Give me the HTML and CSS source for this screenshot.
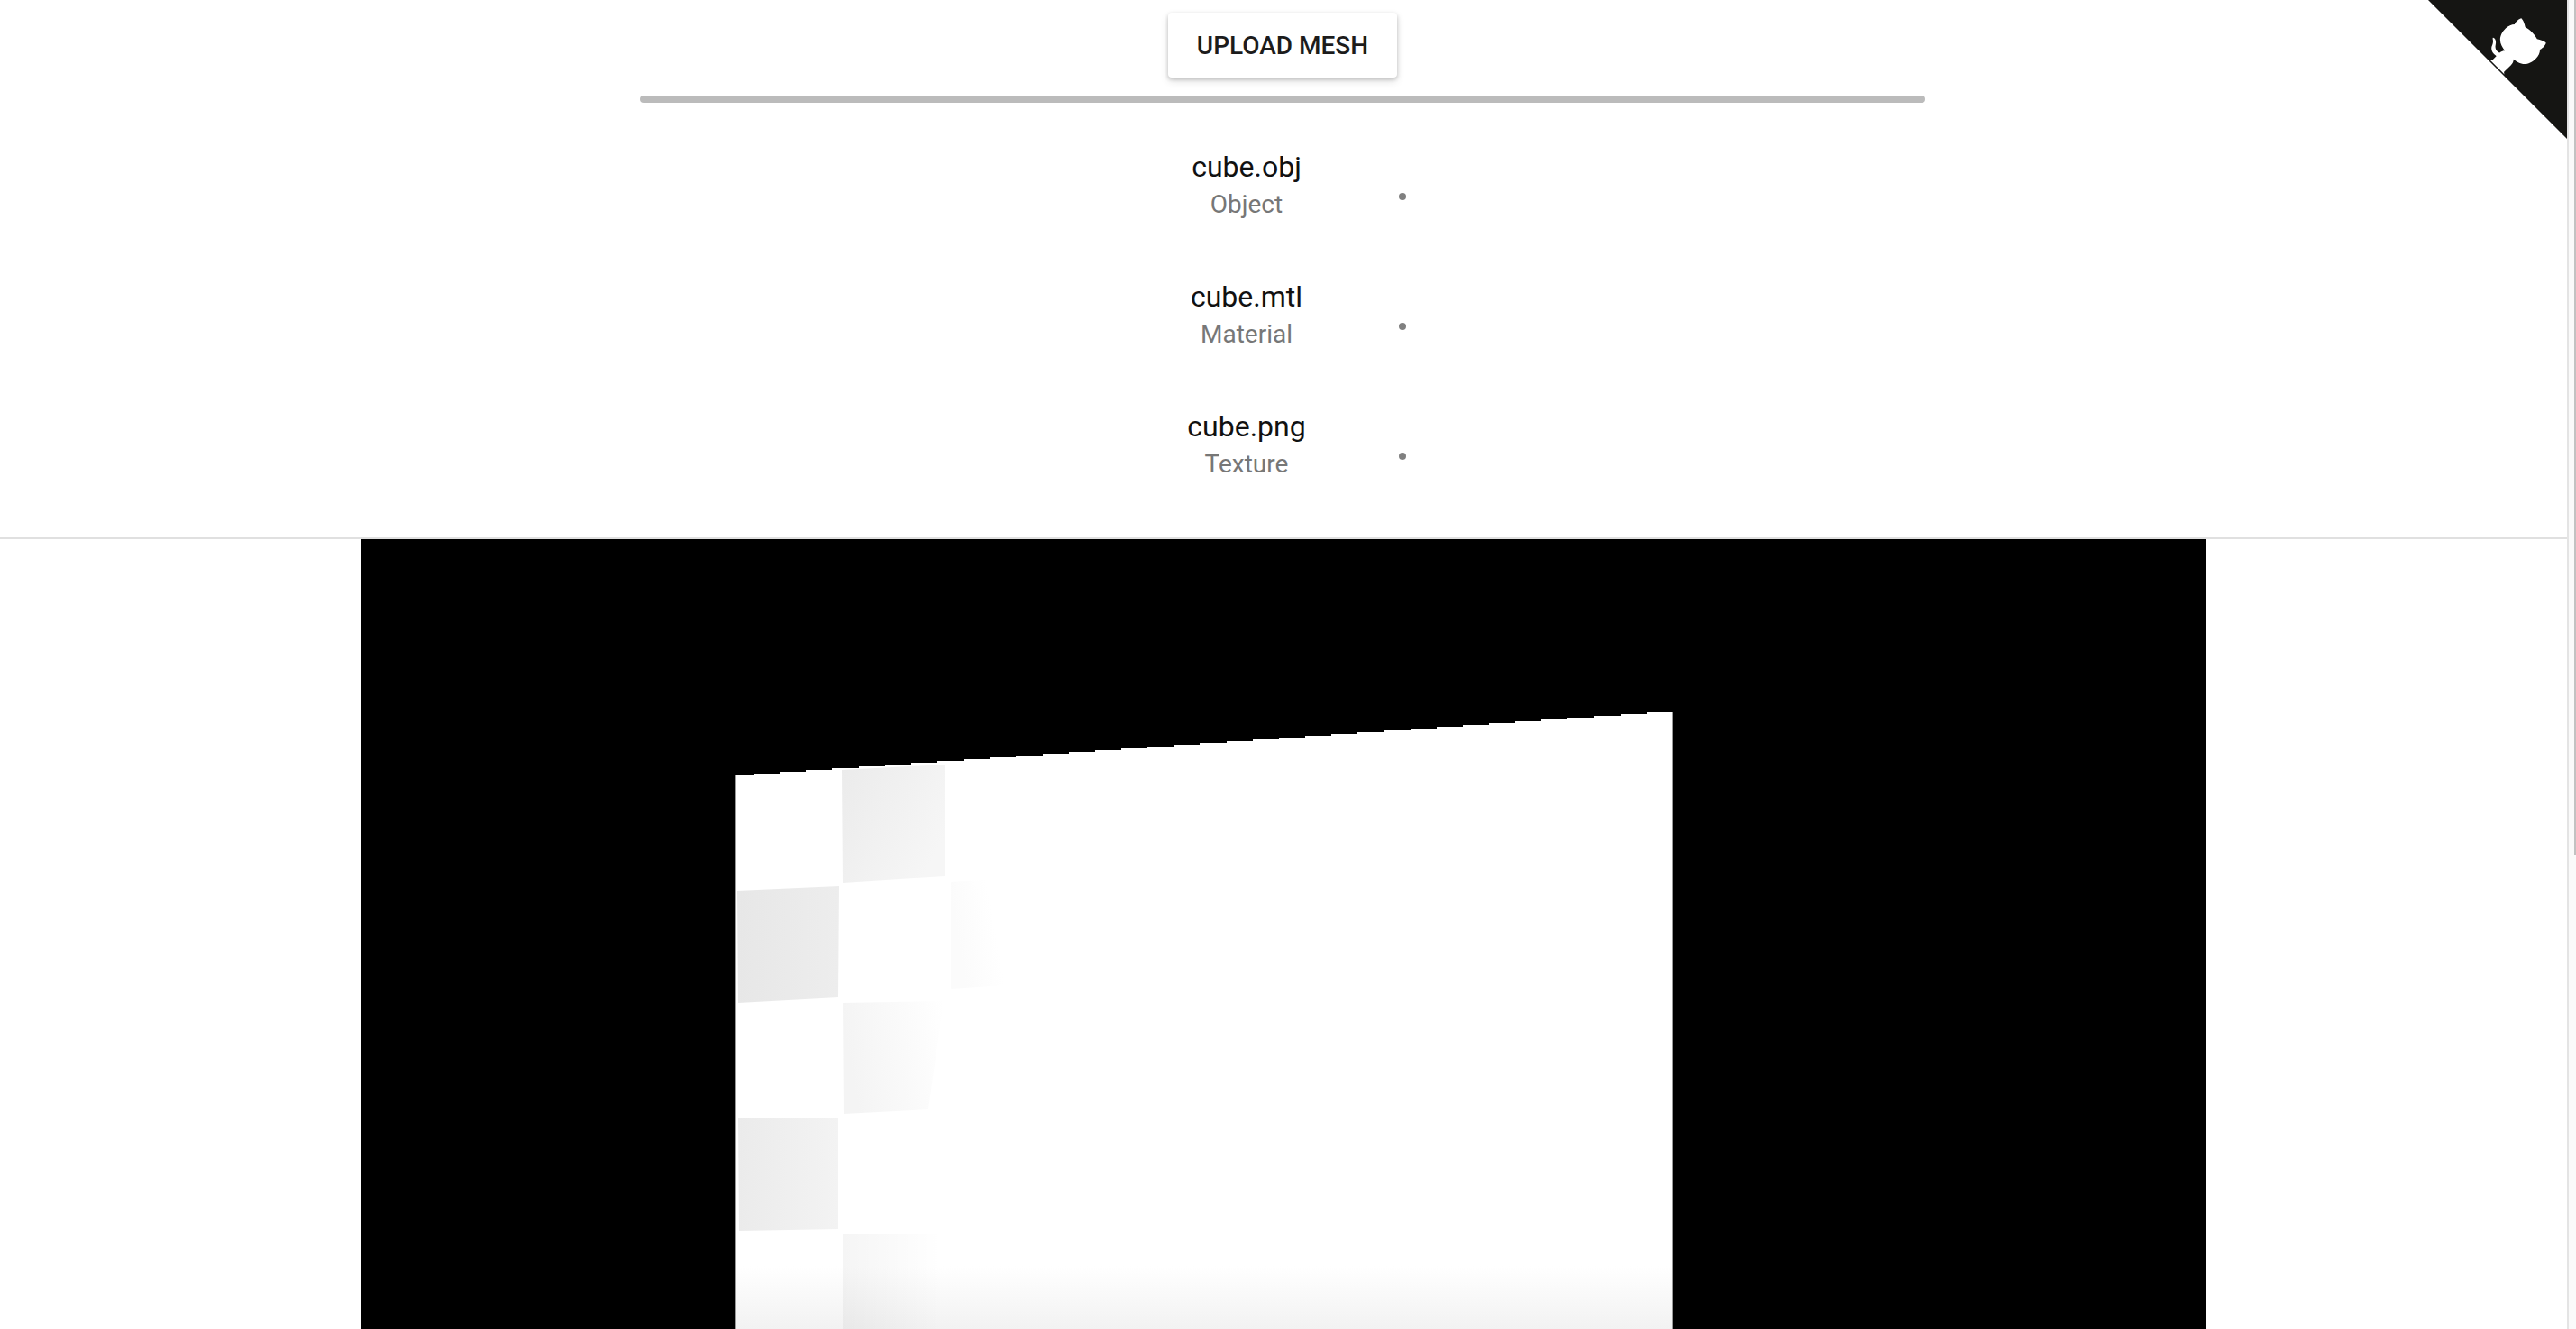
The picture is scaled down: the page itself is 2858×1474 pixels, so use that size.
FILE: index.html
```html
<!DOCTYPE html>
<html lang="en">

<head>
    <meta charset="UTF-8">
    <meta name="viewport" content="width=device-width, initial-scale=1.0">
    <title>Mesh Viewer</title>
    <link rel="stylesheet" href="styles.css">
</head>

<body>
    <div class="page">
        <header class="uploader">
            <button class="upload-button">UPLOAD MESH</button>
            <div class="progress"></div>
            <ul class="file-list">
                <li class="file-row">
                    <div class="file-text">
                        <div class="file-name">cube.obj</div>
                        <div class="file-type">Object</div>
                    </div>
                    <span class="file-dot"></span>
                </li>
                <li class="file-row">
                    <div class="file-text">
                        <div class="file-name">cube.mtl</div>
                        <div class="file-type">Material</div>
                    </div>
                    <span class="file-dot"></span>
                </li>
                <li class="file-row">
                    <div class="file-text">
                        <div class="file-name">cube.png</div>
                        <div class="file-type">Texture</div>
                    </div>
                    <span class="file-dot"></span>
                </li>
            </ul>
        </header>

        <main class="viewport">
            <svg class="mesh" width="2048" height="876" viewBox="0 0 2048 876">
                <defs>
                    <linearGradient id="fadeA" x1="0" y1="0" x2="1" y2="0.6">
                        <stop offset="0" stop-color="#ebebeb"/>
                        <stop offset="1" stop-color="#f6f6f6"/>
                    </linearGradient>
                    <linearGradient id="fadeB" x1="0" y1="0" x2="1" y2="0">
                        <stop offset="0" stop-color="#e7e7e7"/>
                        <stop offset="1" stop-color="#ededed"/>
                    </linearGradient>
                    <linearGradient id="fadeC" x1="0" y1="0.2" x2="0.6" y2="0">
                        <stop offset="0" stop-color="#fbfbfb"/>
                        <stop offset="1" stop-color="#ffffff"/>
                    </linearGradient>
                    <linearGradient id="fadeD" x1="0" y1="0.2" x2="1" y2="0">
                        <stop offset="0" stop-color="#f4f4f4"/>
                        <stop offset="1" stop-color="#ffffff"/>
                    </linearGradient>
                    <linearGradient id="fadeE" x1="0" y1="0" x2="1" y2="0">
                        <stop offset="0" stop-color="#ebebeb"/>
                        <stop offset="1" stop-color="#f3f3f3"/>
                    </linearGradient>
                    <linearGradient id="fadeF" x1="0" y1="0" x2="1" y2="0">
                        <stop offset="0" stop-color="#000000" stop-opacity="0.04"/>
                        <stop offset="1" stop-color="#000000" stop-opacity="0"/>
                    </linearGradient>
                    <linearGradient id="floor" x1="0" y1="0" x2="0" y2="1">
                        <stop offset="0" stop-color="#f2f2f2" stop-opacity="0"/>
                        <stop offset="1" stop-color="#f2f2f2"/>
                    </linearGradient>
                </defs>
                <path class="mesh-face" fill="#ffffff" d="M416 876 V262 h20
                    v-2 h29.14 v-2 h29.14 v-2 h29.14 v-2 h29.14 v-2 h29.14 v-2 h29.14 v-2 h29.14
                    v-2 h29.14 v-2 h29.14 v-2 h29.14 v-2 h29.14 v-2 h29.14 v-2 h29.14 v-2 h29.14
                    v-2 h29.14 v-2 h29.14 v-2 h29.14 v-2 h29.14 v-2 h29.14 v-2 h29.14 v-2 h29.14
                    v-2 h29.14 v-2 h29.14 v-2 h29.14 v-2 h29.14 v-2 h29.14 v-2 h29.14 v-2 h29.14
                    v-2 h29.14 v-2 h29.14 v-2 h29.14 v-2 h29.14 v-2 h29.14 v-2 h29.14 v-2 H1456 V876 Z"/>
                <rect x="416" y="262" width="1" height="614" fill="#999999"/>
                <rect x="1455" y="192" width="1" height="684" fill="#999999"/>
                <polygon points="534,256 649,250 648,374 535,381" fill="url(#fadeA)"/>
                <polygon points="418,390 531,385 530,508 419,514" fill="url(#fadeB)"/>
                <polygon points="655,380 720,376 715,495 655,499" fill="url(#fadeC)"/>
                <polygon points="535,514 647,512 630,632 536,637" fill="url(#fadeD)"/>
                <polygon points="419,642 530,642 530,765 420,767" fill="url(#fadeE)"/>
                <rect x="417" y="806" width="1038" height="70" fill="url(#floor)"/>
                <rect x="535" y="771" width="110" height="105" fill="url(#fadeF)"/>
            </svg>
        </main>
    </div>

    <a class="corner" href="#" aria-label="GitHub">
        <svg width="154" height="154" viewBox="0 0 250 250">
            <path d="M0,0 L250,250 L250,0 Z" fill="#151513"/>
            <g transform="translate(-4 -7.3)" fill="#ffffff">
                <path d="M128.3,109.0 C113.8,99.7 119.0,89.6 119.0,89.6 C122.0,82.7 120.5,78.6 120.5,78.6 C119.2,72.0 123.4,76.3 123.4,76.3 C127.3,80.9 125.5,87.3 125.5,87.3 C122.9,97.6 130.6,101.9 134.4,103.2"/>
                <path d="M115.0,115.0 C114.9,115.1 118.7,116.5 119.8,115.4 L133.7,101.6 C136.9,99.2 139.9,98.4 142.2,98.6 C133.8,88.0 127.5,74.4 143.8,58.0 C148.5,53.4 154.0,51.2 159.7,51.0 C160.3,49.4 163.2,43.6 171.4,40.1 C171.4,40.1 176.1,42.5 178.8,56.2 C183.1,58.6 187.2,61.8 190.9,65.4 C194.5,69.0 197.7,73.2 200.1,77.6 C213.8,80.2 216.3,84.9 216.3,84.9 C212.7,93.1 206.9,96.0 205.4,96.6 C205.1,102.4 203.0,107.8 198.3,112.5 C181.9,128.9 168.3,122.5 157.7,114.1 C157.9,116.9 156.7,120.9 152.7,124.9 L141.0,136.5 C139.8,137.7 141.6,141.9 141.8,141.8 Z"/>
            </g>
        </svg>
    </a>

    <div class="scroll-track"><div class="scroll-thumb"></div></div>
</body>

</html>
```

FILE: styles.css
```css
html, body {
    height: 100%;
    margin: 0;
    overflow: hidden;
}

body {
    font-family: Roboto, "Liberation Sans", sans-serif;
    background-color: #fff;
    color: #111;
}

.page {
    width: 2848px;
    height: 1474px;
    overflow: hidden;
}

.uploader {
    display: flex;
    flex-direction: column;
    align-items: center;
    height: 596px;
    padding-right: 2px;
    border-bottom: 2px solid #e0e0e0;
}

.upload-button {
    width: 254px;
    height: 72px;
    margin-top: 14px;
    padding: 0;
    border: none;
    border-radius: 4px;
    background-color: #fff;
    color: #1c1c1c;
    font-family: inherit;
    font-size: 28px;
    font-weight: 500;
    box-shadow: 0 2px 4px rgba(0, 0, 0, 0.2), 0 4px 10px rgba(0, 0, 0, 0.12);
}

.progress {
    width: 1426px;
    height: 8px;
    margin-top: 20px;
    border-radius: 4px;
    background-color: #bbb;
}

.file-list {
    list-style: none;
    width: 1426px;
    margin: 0;
    padding: 0;
}

.file-row {
    display: flex;
    height: 144px;
}

.file-text {
    width: 338px;
    margin-left: 504px;
    padding-top: 51px;
    text-align: center;
    box-sizing: border-box;
}

.file-name {
    font-size: 32px;
    line-height: 40px;
    color: #111;
}

.file-type {
    font-size: 28px;
    line-height: 40px;
    margin-top: 2px;
    color: #777;
}

.file-dot {
    width: 8px;
    height: 8px;
    margin-top: 100px;
    border-radius: 50%;
    background-color: #808080;
}

.viewport {
    width: 2048px;
    height: 876px;
    margin-left: 400px;
    background-color: #000;
}

.mesh {
    display: block;
}

.mesh-face {
    shape-rendering: crispEdges;
}

.corner {
    position: absolute;
    top: 0;
    right: 10px;
    display: block;
    width: 154px;
    height: 154px;
    overflow: hidden;
}

.corner svg {
    display: block;
}

.scroll-track {
    position: absolute;
    top: 0;
    right: 0;
    width: 8px;
    height: 100%;
    border-left: 2px solid #e4e4e4;
    background-color: #fafafa;
}

.scroll-thumb {
    width: 2px;
    height: 948px;
    margin-left: 6px;
    background-color: #c2c2c2;
}
```
